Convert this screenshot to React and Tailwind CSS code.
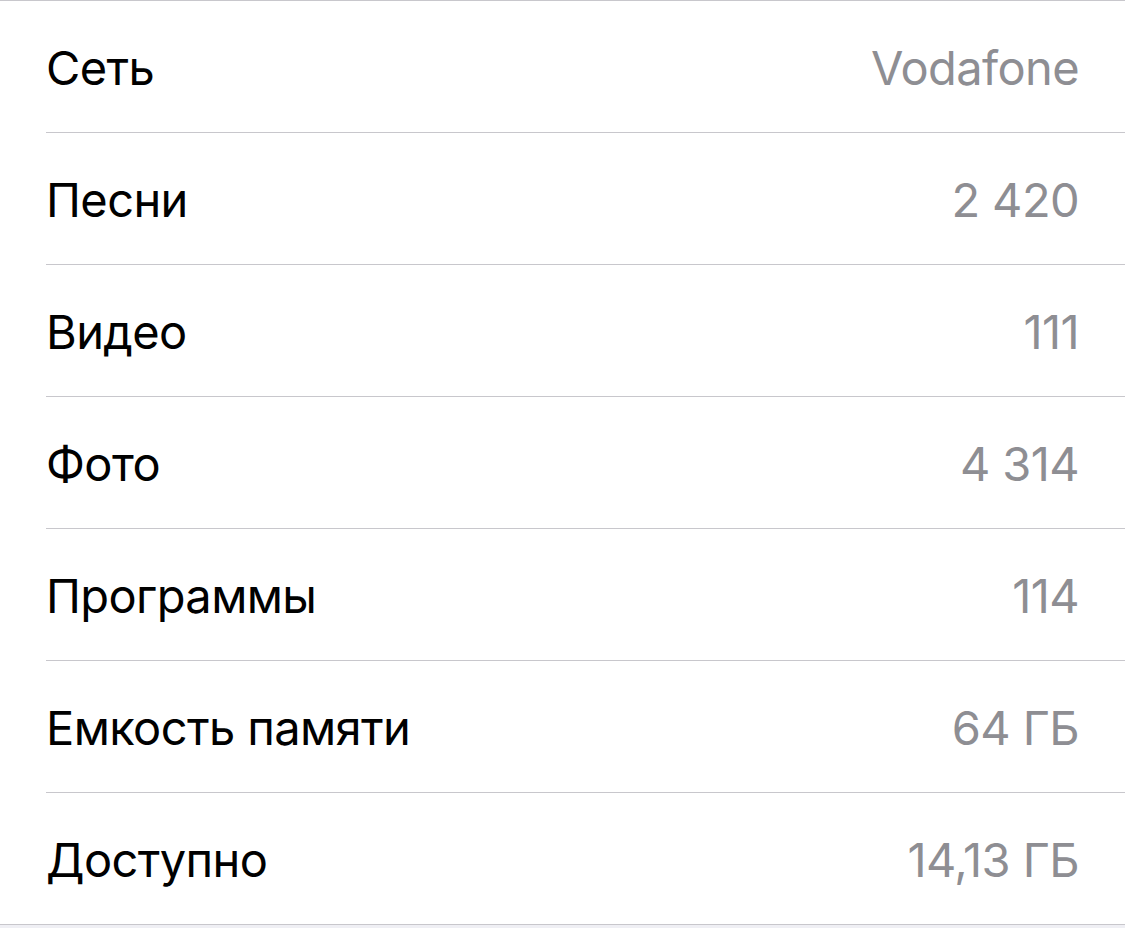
import React from 'react';

const rows = [
  { label: 'Сеть', value: 'Vodafone' },
  { label: 'Песни', value: '2 420' },
  { label: 'Видео', value: '111' },
  { label: 'Фото', value: '4 314' },
  { label: 'Программы', value: '114' },
  { label: 'Емкость памяти', value: '64 ГБ' },
  { label: 'Доступно', value: '14,13 ГБ' },
];

const App = () => {
  return (
    <div className="min-h-[928px] bg-[#efeff4]" style={{ fontFamily: 'Inter, "Noto Sans", sans-serif' }}>
      {/* Info list */}
      <div className="bg-white border-t border-b border-[#c8c7cc]">
        {rows.map((row, i) => (
          <div key={row.label} className="pl-[46px]">
            <div
              className={
                'flex items-center justify-between pt-[4px] pr-[46px] text-[47px] tracking-[-0.6px] ' +
                (i < rows.length - 1 ? 'h-[132px] border-b border-[#c8c7cc]' : 'h-[131px]')
              }
            >
              <span className="text-black">{row.label}</span>
              <span className="text-[#8e8e93]">{row.value}</span>
            </div>
          </div>
        ))}
      </div>
    </div>
  );
};

export default App;
